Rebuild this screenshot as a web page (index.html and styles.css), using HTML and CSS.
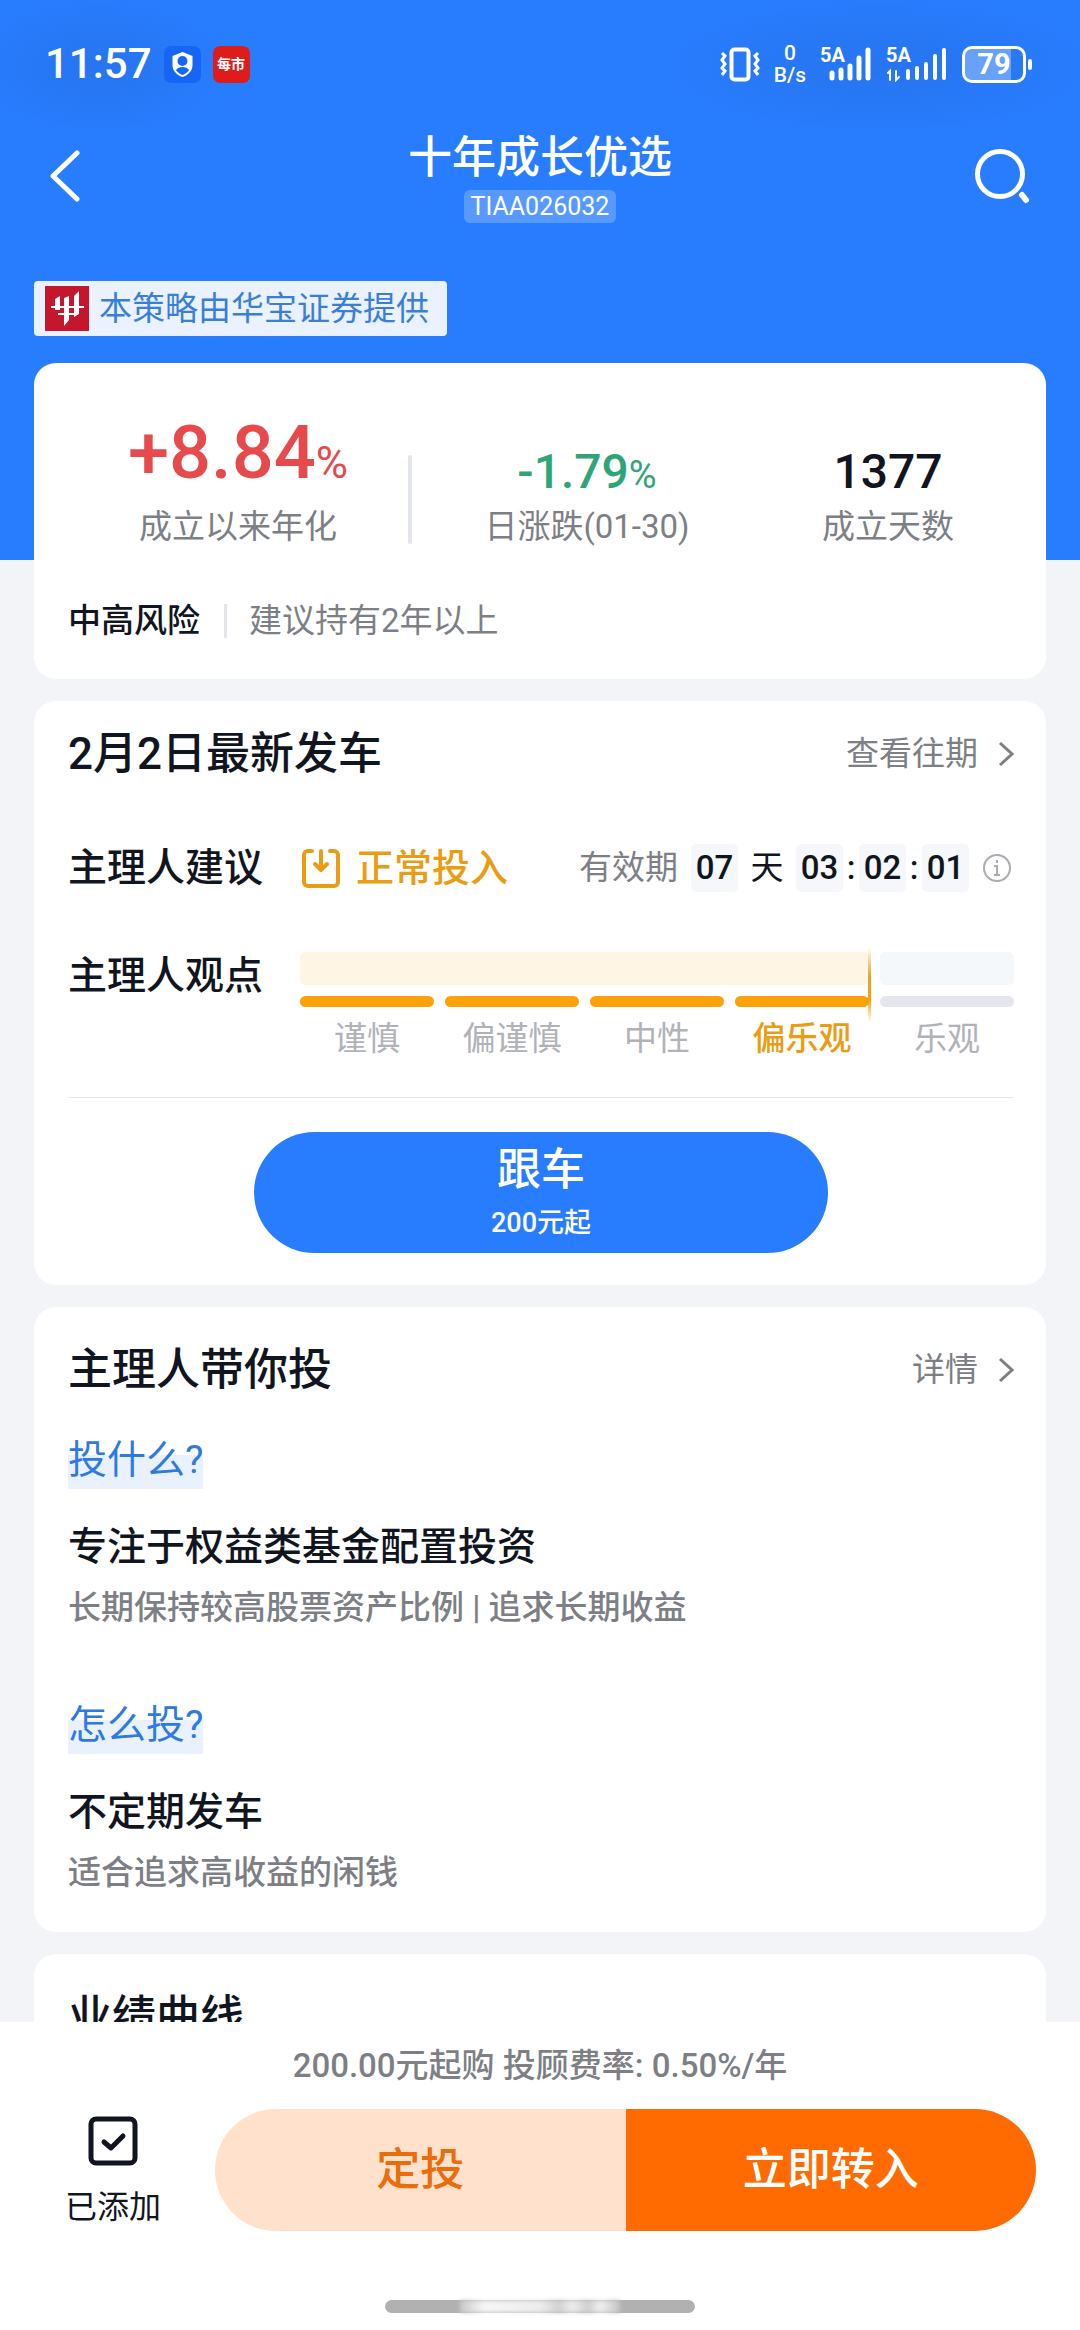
FILE: index.html
```html
<!DOCTYPE html>
<html lang="zh-CN">
<head>
<meta charset="utf-8">
<meta name="viewport" content="width=device-width, initial-scale=1">
<title>十年成长优选</title>
<link rel="stylesheet" href="styles.css">
</head>
<body>
<div class="app">
  <div class="status">
    <div class="status-side">
      <span class="clock">11:57</span>
      <svg class="app-icon" width="37" height="37" viewBox="0 0 37 37" aria-hidden="true">
        <rect width="37" height="37" rx="6" fill="#1765f6"/>
        <path d="M18.500 6l10 4v9c0 6-4.500 10-10 12-5.500-2-10-6-10-12v-9z" fill="#fff"/>
        <circle cx="18.500" cy="15" r="5" fill="#1765f6"/>
        <path d="M12 24c2-4 11-4 13 0-1.500 2.500-4 4-6.500 5-2.500-1-5-2.500-6.500-5z" fill="#1765f6"/>
      </svg>
      <span class="app-icon app-icon-red">每市</span>
    </div>
    <div class="status-side status-right">
      <svg width="40" height="36" viewBox="0 0 40 36" fill="none" stroke="#fff" aria-hidden="true">
        <rect x="11.500" y="3.500" width="17" height="30" rx="3" stroke-width="4"/>
        <path d="M2 7l3 3-3 4 3 4-3 4 3 3-3 4M38 7l-3 3 3 4-3 4 3 4-3 3 3 4" stroke-width="3"/>
      </svg>
      <span class="rate"><span>0</span><span>B/s</span></span>
      <span class="signal">
        <span class="signal-net">5A</span>
        <svg width="52" height="36" viewBox="0 0 52 36" stroke="#fff" stroke-width="5" stroke-linecap="round" aria-hidden="true">
          <path d="M12 32v-5M21 32v-8M30 32v-12M39 32v-20M48 32v-28"/>
        </svg>
      </span>
      <span class="signal">
        <span class="signal-net">5A</span>
        <svg width="62" height="36" viewBox="0 0 62 36" stroke="#fff" fill="none" stroke-width="4" stroke-linecap="round" aria-hidden="true">
          <path d="M22 32v-7M31 32v-10M40 32v-14M49 32v-22M58 32v-28"/>
          <path d="M2 27l2-2v9M10 25v9l3-3" stroke-width="2"/>
        </svg>
      </span>
      <span class="battery"><span class="battery-body">79</span><span class="battery-tip"></span></span>
    </div>
  </div>

  <header class="nav">
    <button class="icon-button" type="button" aria-label="返回">
      <svg width="30" height="54" viewBox="0 0 30 54" fill="none" stroke="#fff" stroke-width="5" stroke-linecap="round" stroke-linejoin="round" aria-hidden="true"><path d="M27 4L3 27l24 23"/></svg>
    </button>
    <div class="nav-title">
      <h1>十年成长优选</h1>
      <span class="code">TIAA026032</span>
    </div>
    <button class="icon-button" type="button" aria-label="搜索">
      <svg width="56" height="56" viewBox="0 0 56 56" fill="none" stroke="#fff" stroke-width="5" stroke-linecap="round" aria-hidden="true"><circle cx="26" cy="26" r="22.500"/><path d="M48 47l4 5" stroke-width="6"/></svg>
    </button>
  </header>

  <main class="content">
    <div class="provider">
      <svg width="44" height="45" viewBox="0 0 44 45" aria-hidden="true">
        <rect width="44" height="45" fill="#c4162c"/>
        <path d="M10 13l5-3v14h-5zM19 12l5-2v24l-5 6zM29 10l5-5v23l-5 3z" fill="#fff"/>
        <path d="M6 21h33M13 28h20" stroke="#fff" stroke-width="2"/>
      </svg>
      <span>本策略由华宝证券提供</span>
    </div>

    <section class="card summary">
      <div class="stats">
        <div class="stat">
          <span class="figure figure-large rise">+8.84<small>%</small></span>
          <span class="note">成立以来年化</span>
        </div>
        <span class="stat-rule"></span>
        <div class="stat">
          <span class="figure fall">-1.79<small>%</small></span>
          <span class="note">日涨跌(01-30)</span>
        </div>
        <div class="stat">
          <span class="figure">1377</span>
          <span class="note">成立天数</span>
        </div>
      </div>
      <div class="risk">
        <span class="risk-level">中高风险</span>
        <span class="note">建议持有2年以上</span>
      </div>
    </section>

    <section class="card issue">
      <div class="card-head">
        <h2>2月2日最新发车</h2>
        <a class="more" href="#history">查看往期
          <svg width="16" height="26" viewBox="0 0 16 26" fill="none" stroke="currentColor" stroke-width="3" aria-hidden="true"><path d="M2 2l12 11L2 24"/></svg>
        </a>
      </div>
      <div class="advice">
        <h3>主理人建议</h3>
        <span class="action">
          <svg width="38" height="40" viewBox="0 0 38 40" fill="none" stroke="currentColor" stroke-width="4" stroke-linecap="round" stroke-linejoin="round" aria-hidden="true"><path d="M10 3H6a4 4 0 0 0-4 4v27a4 4 0 0 0 4 4h26a4 4 0 0 0 4-4V7a4 4 0 0 0-4-4h-4M19 3v18M13 16l6 6 6-6"/></svg>
          正常投入
        </span>
        <span class="validity">
          <span class="note">有效期</span>
          <span class="unit">07</span><span class="day">天</span><span class="unit">03</span><span class="colon">:</span><span class="unit">02</span><span class="colon">:</span><span class="unit">01</span>
          <svg class="info" width="28" height="28" viewBox="0 0 28 28" fill="none" stroke="#a9acb4" stroke-width="2" aria-hidden="true"><circle cx="14" cy="14" r="13"/><path d="M14 6v3M11 12h3v9M11 21h6"/></svg>
        </span>
      </div>
      <div class="view">
        <h3>主理人观点</h3>
        <div class="meter">
          <span class="band band-on"></span><span class="band"></span>
          <span class="bar bar-on"></span><span class="bar bar-on"></span><span class="bar bar-on"></span><span class="bar bar-on"></span><span class="bar"></span>
          <span class="level">谨慎</span><span class="level">偏谨慎</span><span class="level">中性</span><span class="level level-on">偏乐观</span><span class="level">乐观</span>
        </div>
      </div>
      <div class="follow-row">
        <button class="follow" type="button"><span>跟车</span><small>200元起</small></button>
      </div>
    </section>

    <section class="card guide">
      <div class="card-head">
        <h2>主理人带你投</h2>
        <a class="more" href="#detail">详情
          <svg width="16" height="26" viewBox="0 0 16 26" fill="none" stroke="currentColor" stroke-width="3" aria-hidden="true"><path d="M2 2l12 11L2 24"/></svg>
        </a>
      </div>
      <div class="topic">
        <span class="question">投什么?</span>
        <h3>专注于权益类基金配置投资</h3>
        <p class="note">长期保持较高股票资产比例 | 追求长期收益</p>
      </div>
      <div class="topic">
        <span class="question">怎么投?</span>
        <h3>不定期发车</h3>
        <p class="note">适合追求高收益的闲钱</p>
      </div>
    </section>

    <section class="card curve">
      <h2>业绩曲线</h2>
    </section>
  </main>

  <footer class="dock">
    <p class="note fee">200.00元起购 投顾费率: 0.50%/年</p>
    <div class="dock-actions">
      <button class="added" type="button">
        <svg width="50" height="50" viewBox="0 0 50 50" fill="none" stroke="#11151f" stroke-linecap="round" stroke-linejoin="round" aria-hidden="true"><rect x="3" y="3" width="44" height="44" rx="5" stroke-width="5"/><path d="M16 26l7 6 12-12" stroke-width="5"/></svg>
        <span>已添加</span>
      </button>
      <button class="buy buy-plan" type="button">定投</button>
      <button class="buy buy-now" type="button">立即转入</button>
    </div>
    <div class="home-bar"><span class="home-haze"></span></div>
  </footer>
</div>
</body>
</html>
```
FILE: styles.css
```css
:root {
  --blue: #287dff;
  --ink: #11151f;
  --gray: #7d7f85;
  --amber: #e99d14;
  --page: #f2f4f8;
}

* { box-sizing: border-box; }

body {
  margin: 0;
  background: #fff;
  color: var(--ink);
  font-family: Roboto, "Noto Sans CJK SC", sans-serif;
  font-size: 33px;
  line-height: 34px;
}

h1, h2, h3, p { margin: 0; font-weight: 500; }
h1, h2 { font-size: 44px; line-height: 48px; }
h3 { font-size: 39px; line-height: 48px; }

button {
  border: 0;
  padding: 0;
  background: none;
  color: inherit;
  font: inherit;
}

svg { display: block; flex: none; }

.app {
  display: flex;
  flex-direction: column;
  height: 100vh;
  background:
    radial-gradient(140px 75px at 100px 66px, rgba(36, 100, 210, 0.35), transparent),
    radial-gradient(240px 75px at calc(100% - 200px) 66px, rgba(36, 100, 210, 0.35), transparent),
    linear-gradient(var(--blue) 0 560px, var(--page) 560px);
}

/* system status bar */
.status {
  display: flex;
  justify-content: space-between;
  padding: 40px 48px 0 45px;
  color: #fff;
}
.status-side { display: flex; align-items: center; height: 48px; }
.clock { font-size: 42px; font-weight: 500; margin-right: 12px; }
.app-icon { width: 37px; height: 37px; border-radius: 7px; }
.app-icon-red {
  margin-left: 12px;
  background: #df1c1c;
  font-size: 14px;
  font-weight: 700;
  line-height: 37px;
  text-align: center;
}
.status-right { gap: 14px; }
.rate {
  display: flex;
  flex-direction: column;
  align-items: center;
  font-size: 21px;
  font-weight: 500;
  line-height: 22px;
}
.signal { position: relative; }
.signal-net {
  position: absolute;
  left: 0;
  top: 0;
  font-size: 20px;
  font-weight: 700;
  line-height: 18px;
}
.battery { display: flex; align-items: center; gap: 2px; }
.battery-body {
  width: 64px;
  height: 37px;
  border: 3px solid #fff;
  border-radius: 10px;
  background: linear-gradient(90deg, rgba(255, 255, 255, 0.3) 79%, transparent 79%);
  font-size: 29px;
  font-weight: 700;
  line-height: 31px;
  text-align: center;
}
.battery-tip { width: 4px; height: 11px; border-radius: 2px; background: #fff; }

/* page header */
.nav {
  display: flex;
  justify-content: space-between;
  align-items: center;
  margin-top: 46px;
  padding: 0 50px;
  color: #fff;
}
.icon-button { display: flex; width: 56px; padding-bottom: 5px; }
.nav-title { display: flex; flex-direction: column; align-items: center; gap: 8px; }
.code {
  padding: 0 7px;
  border-radius: 6px;
  background: rgba(255, 255, 255, 0.22);
  font-size: 25px;
  line-height: 33px;
}

.content {
  flex: 1;
  min-height: 0;
  overflow: hidden auto;
  scrollbar-width: none;
  padding: 58px 34px 0;
}

.provider {
  display: flex;
  align-items: center;
  gap: 10px;
  width: fit-content;
  height: 55px;
  margin-bottom: 27px;
  padding: 0 18px 0 11px;
  border-radius: 4px;
  background: #e9f2fe;
  color: #3a7fd5;
}

.card {
  margin-bottom: 22px;
  padding: 0 32px 0 34px;
  border-radius: 22px;
  background: #fff;
}
.note { color: var(--gray); }

/* return figures */
.summary { padding-top: 50px; padding-bottom: 41px; }
.stats {
  display: grid;
  grid-template-columns: 340fr 4px 350fr 252fr;
  align-items: end;
}
.stat { display: flex; flex-direction: column; align-items: center; gap: 17px; }
.stat-rule { height: 89px; border-radius: 2px; background: #e3e5ee; }
.figure { font-size: 48px; font-weight: 500; line-height: 42px; }
.figure small { font-size: 38px; font-weight: 400; line-height: 0; }
.figure-large { font-size: 74px; line-height: 80px; }
.figure-large small { font-size: 44px; }
.rise { color: #e64a4c; }
.fall { color: #2fa577; }
.risk { display: flex; margin-top: 60px; }
.risk-level { font-weight: 500; padding-right: 24px; margin-right: 22px; border-right: 3px solid #e3e5ea; }

.card-head { display: flex; justify-content: space-between; align-items: center; }
.more {
  display: flex;
  align-items: center;
  gap: 20px;
  color: var(--gray);
  text-decoration: none;
}

/* latest issue */
.issue { padding-top: 29px; padding-bottom: 32px; }
.advice { display: flex; align-items: center; margin-top: 66px; }
.advice h3, .view h3 { flex: none; width: 234px; }
.action {
  display: flex;
  align-items: center;
  gap: 16px;
  color: var(--amber);
  font-size: 38px;
  font-weight: 500;
}
.validity { display: flex; align-items: center; margin-left: auto; }
.unit {
  width: 47px;
  border-radius: 5px;
  background: #f6f7fa;
  font-weight: 500;
  line-height: 48px;
  text-align: center;
}
.validity .note { margin-right: 13px; }
.day { width: 58px; text-align: center; }
.colon { width: 16px; font-weight: 500; text-align: center; }
.info { margin-left: 14px; margin-right: 3px; }

.view { display: flex; margin-top: 60px; }
.view h3 { width: 232px; }
.meter {
  display: grid;
  grid-template-columns: repeat(5, 1fr);
  column-gap: 11px;
  flex: 1;
}
.band { height: 33px; border-radius: 5px; background: #f5f8fb; }
.band-on { position: relative; grid-column: span 4; background: #fff5e4; }
.band-on::after {
  content: "";
  position: absolute;
  right: -2px;
  top: -5px;
  width: 3px;
  height: 75px;
  background: linear-gradient(transparent, #e2a52a 40%, #f8a10a 70%, transparent);
}
.bar { height: 11px; margin-top: 11px; border-radius: 6px; background: #e3e6ee; }
.bar-on { background: #faa20a; }
.level { margin-top: 15px; color: #b0b2b8; text-align: center; white-space: nowrap; }
.level-on { color: var(--amber); font-weight: 500; }

.follow-row {
  display: flex;
  justify-content: center;
  margin-top: 41px;
  padding-top: 34px;
  border-top: 1px solid #e6e8eb;
}
.follow {
  display: flex;
  flex-direction: column;
  align-items: center;
  justify-content: center;
  gap: 12px;
  width: 574px;
  max-width: 100%;
  height: 121px;
  border-radius: 61px;
  background: var(--blue);
  color: #fff;
  font-size: 44px;
  font-weight: 500;
  line-height: 48px;
}
.follow small { font-size: 27px; line-height: 34px; }

/* how the manager invests */
.guide { padding-top: 39px; padding-bottom: 42px; }
.topic { display: flex; flex-direction: column; align-items: flex-start; margin-top: 46px; }
.topic + .topic { margin-top: 80px; }
.topic h3 { margin: 34px 0 20px; }
.question {
  padding-bottom: 9px;
  background: linear-gradient(transparent 15px, #e8f1fc 15px);
  color: #2f7ae0;
  font-size: 39px;
  line-height: 40px;
}

.curve { padding-top: 39px; padding-bottom: 400px; }

/* bottom purchase dock */
.dock { flex: none; padding: 27px 0 17px; background: #fff; }
.fee { text-align: center; }
.dock-actions {
  display: flex;
  align-items: stretch;
  height: 122px;
  margin-top: 26px;
  padding: 0 44px 0 65px;
}
.added {
  display: flex;
  flex-direction: column;
  align-items: center;
  gap: 24px;
  padding-top: 7px;
  margin-right: 54px;
  font-size: 32px;
}
.buy { flex: 1; font-size: 44px; font-weight: 500; }
.buy-plan { border-radius: 61px 0 0 61px; background: #ffe1cc; color: #eb6c0a; }
.buy-now { border-radius: 0 61px 61px 0; background: #ff6b00; color: #fff; }
.home-bar {
  display: flex;
  justify-content: center;
  width: 310px;
  height: 13px;
  margin: 69px auto 0;
  border-radius: 7px;
  background: #b1b1b1;
}
.home-haze {
  width: 160px;
  height: 13px;
  background: linear-gradient(90deg, #c8c8c8, #f6f6f6 15%, #ededed 50%, #d2d2d2 62%, #eee 70%, #d0d0d0 80%, #f0f0f0 88%, #c4c4c4);
  filter: blur(2px);
}
```
